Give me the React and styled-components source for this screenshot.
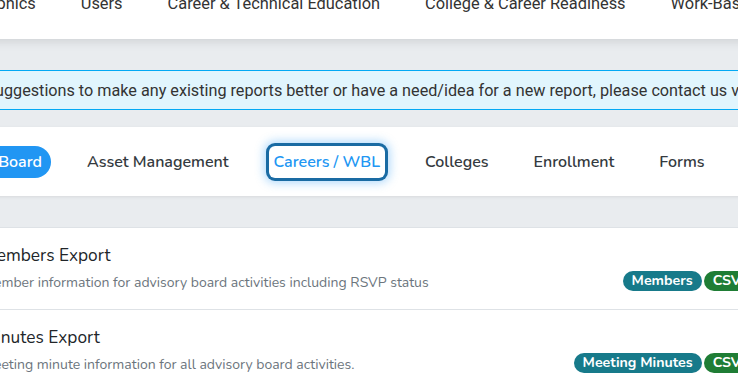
import React from 'react'
import styled, { createGlobalStyle } from 'styled-components'

const GlobalStyle = createGlobalStyle`
  html, body {
    margin: 0;
    padding: 0;
    background: #e9ecef;
    overflow: hidden;
  }
  body {
    font-family: "Nunito", "Lato", "Noto Sans", sans-serif;
    color: #343a40;
  }
`

const topLinks = ['Demographics', 'Users', 'Career & Technical Education', 'College & Career Readiness', 'Work-Based Learning']
const tabs = ['Advisory Board', 'Asset Management', 'Careers / WBL', 'Colleges', 'Enrollment', 'Forms', 'Reports']
const reports = [
  {
    title: 'Members Export',
    desc: 'Member information for advisory board activities including RSVP status',
    tags: ['Members'],
  },
  {
    title: 'Minutes Export',
    desc: 'Meeting minute information for all advisory board activities.',
    tags: ['Meeting Minutes'],
  },
]

export default function App() {
  return (
    <>
      <GlobalStyle />
      <Page>
        <TopNav>
          {topLinks.map((l) => (
            <TopLink key={l}>{l}</TopLink>
          ))}
        </TopNav>

        <Alert>
          If you have suggestions to make any existing reports better or have a need/idea for a new report, please contact us via the help desk.
        </Alert>

        <TabCard>
          {tabs.map((t, i) => (
            <Tab key={t} active={i === 0} focused={i === 2}>
              {t}
            </Tab>
          ))}
        </TabCard>

        <ListCard>
          {reports.map((r) => (
            <Row key={r.title}>
              <RowText>
                <RowTitle>{r.title}</RowTitle>
                <RowDesc>{r.desc}</RowDesc>
              </RowText>
              <Badges>
                {r.tags.map((tag) => (
                  <Badge key={tag} color="#177a8a">{tag}</Badge>
                ))}
                <Badge color="#1f7d35">CSV</Badge>
              </Badges>
            </Row>
          ))}
        </ListCard>
      </Page>
    </>
  )
}

const Page = styled.div`
  margin-left: -110px;
  width: 872px;
  display: flex;
  flex-direction: column;
`

const TopNav = styled.nav`
  height: 72px;
  margin-top: -33px;
  background: #fff;
  display: flex;
  align-items: center;
  gap: 45px;
  padding-left: 40px;
  box-shadow: 0 2px 10px rgba(0, 0, 0, 0.12);
  position: relative;
  z-index: 1;
  white-space: nowrap;
`

const TopLink = styled.span`
  font-family: "Roboto", "Liberation Sans", sans-serif;
  font-size: 16.4px;
  color: #333;
`

const Alert = styled.div`
  margin-top: 31px;
  height: 38px;
  display: flex;
  align-items: center;
  padding-left: 15px;
  background: #e1f5fd;
  border-top: 1px solid #03a9f4;
  border-bottom: 1px solid #03a9f4;
  font-family: "Roboto", "Liberation Sans", sans-serif;
  font-size: 16.2px;
  color: #333;
  white-space: nowrap;
`

const TabCard = styled.div`
  margin-top: 17px;
  height: 69px;
  background: #fff;
  display: flex;
  align-items: center;
  gap: 27px;
  padding-left: 30px;
  box-shadow: 0 1px 3px rgba(0, 0, 0, 0.08);
  white-space: nowrap;
`

const Tab = styled.span`
  font-size: 16px;
  font-weight: 600;
  line-height: 20px;
  padding: 6px ${({ focused }) => (focused ? 5 : 9)}px;
  margin: 0 ${({ focused }) => (focused ? 4 : 0)}px;
  border-radius: ${({ focused }) => (focused ? 6 : 16)}px;
  color: ${({ active, focused }) => (active ? '#fff' : focused ? '#2196f3' : '#343a40')};
  background: ${({ active }) => (active ? '#2196f3' : 'transparent')};
  box-shadow: ${({ focused }) =>
    focused ? '0 0 0 3px #1a6ba3, 0 0 10px 5px rgba(33, 150, 243, 0.35)' : 'none'};
`

const ListCard = styled.div`
  margin-top: 31px;
  background: #fff;
  border-top: 1px solid #dee2e6;
`

const Row = styled.div`
  display: flex;
  align-items: flex-end;
  justify-content: space-between;
  padding: 16px 12px 17px 92px;
  border-bottom: 1px solid #dee2e6;
`

const RowText = styled.div`
  display: flex;
  flex-direction: column;
  gap: 6px;
`

const RowTitle = styled.div`
  font-size: 17.3px;
  color: #212529;
  line-height: 24px;
`

const RowDesc = styled.div`
  font-size: 14px;
  color: #6c757d;
  line-height: 18px;
`

const Badges = styled.div`
  display: flex;
  gap: 2px;
  margin-bottom: 1px;
`

const Badge = styled.span`
  background: ${({ color }) => color};
  color: #fff;
  font-size: 14.2px;
  font-weight: 700;
  line-height: 20px;
  padding: 0 9px;
  border-radius: 10px;
`
